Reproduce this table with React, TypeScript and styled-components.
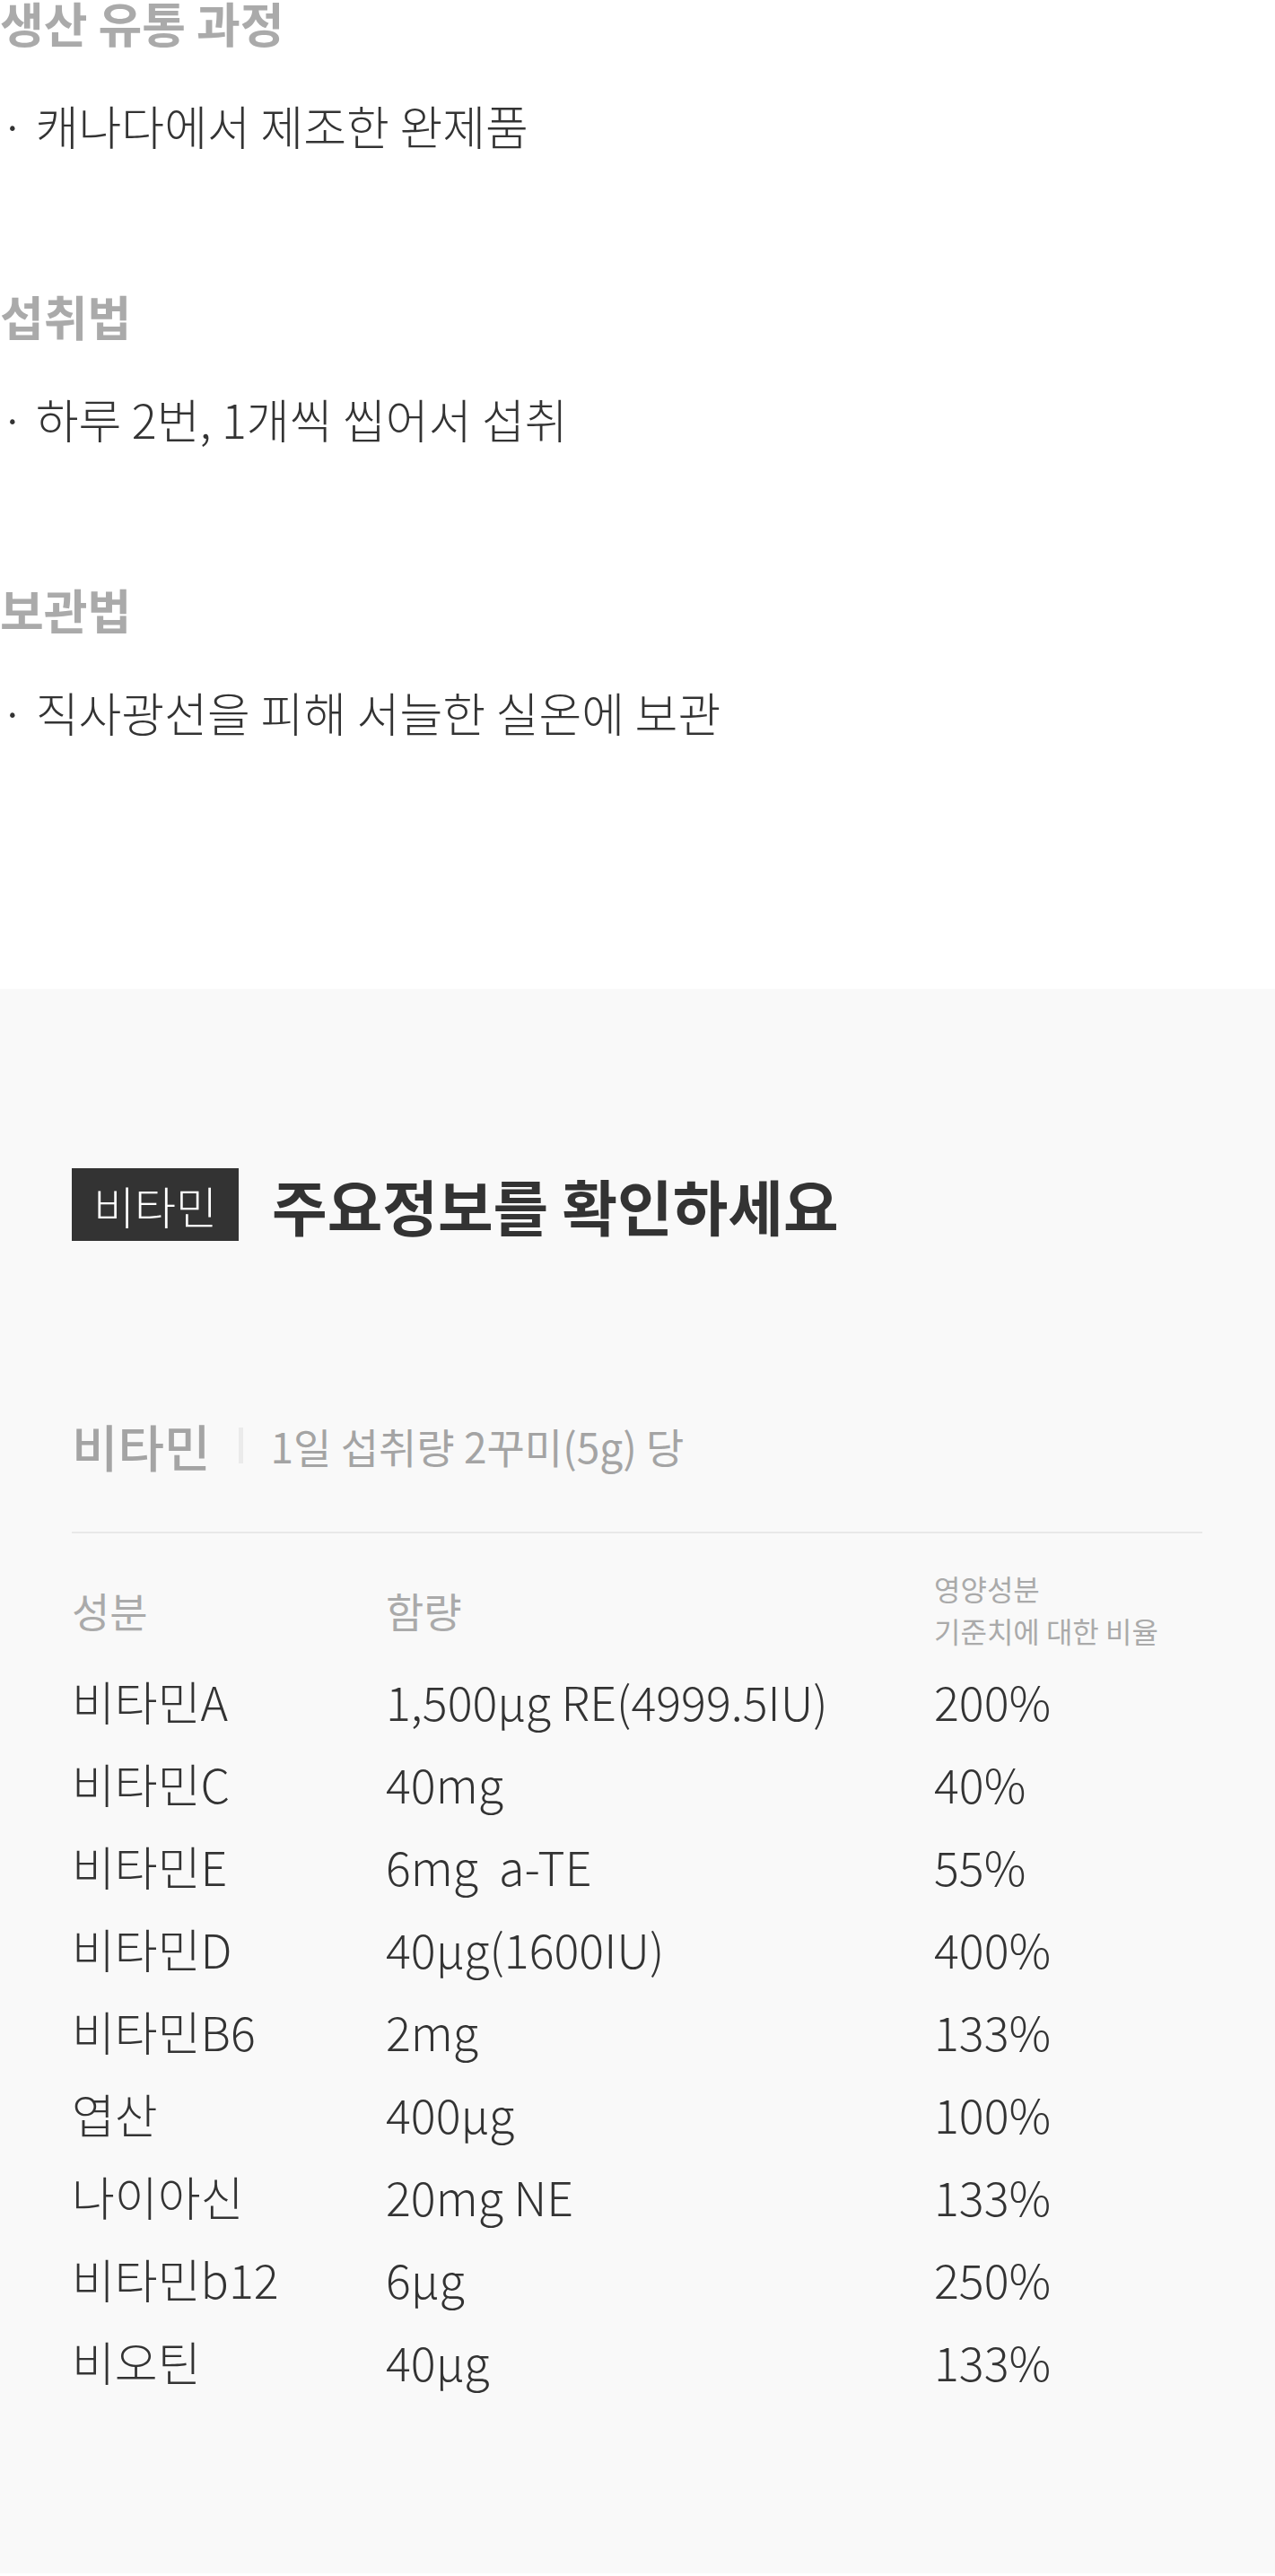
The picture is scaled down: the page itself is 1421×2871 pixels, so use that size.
import styled, { createGlobalStyle } from 'styled-components';

const GlobalStyle = createGlobalStyle`
  body {
    margin: 0;
    background: #fff;
    font-family: "Noto Sans CJK KR", "Noto Sans", sans-serif;
    color: #333;
  }
`;

const Page = styled.div`
  width: 1421px;
`;

const InfoList = styled.div`
  display: flex;
  flex-direction: column;
  gap: 157px;
  padding-bottom: 278px;
`;

const InfoBlock = styled.section`
  display: flex;
  flex-direction: column;
  gap: 60px;
`;

const InfoTitle = styled.h3`
  margin: 0;
  font-size: 53px;
  font-weight: 700;
  line-height: 50px;
  color: #aaa;
`;

const InfoText = styled.p`
  margin: 0;
  font-size: 52px;
  font-weight: 300;
  line-height: 60px;
  color: #333;
`;

const Panel = styled.section`
  background: #f9f9f9;
  padding: 200px 81px 190px 80px;
`;

const PanelHead = styled.div`
  display: flex;
  align-items: center;
  gap: 37px;
`;

const Badge = styled.span`
  display: inline-flex;
  align-items: center;
  justify-content: center;
  height: 81px;
  padding: 0 24px;
  background: #333;
  color: #fff;
  font-size: 50px;
  font-weight: 300;
`;

const PanelTitle = styled.h2`
  margin: 0;
  font-size: 67px;
  font-weight: 700;
  line-height: 81px;
  color: #333;
`;

const SubHead = styled.div`
  display: flex;
  align-items: center;
  gap: 31px;
  margin-top: 187px;
  padding-bottom: 56px;
  border-bottom: 2px solid #e8e8e8;
`;

const SubTitle = styled.span`
  font-size: 56px;
  font-weight: 500;
  color: #a4a4a4;
`;

const Divider = styled.span`
  width: 5px;
  height: 40px;
  background: #ebebeb;
`;

const SubNote = styled.span`
  font-size: 46px;
  font-weight: 400;
  color: #a4a4a4;
`;

const Table = styled.div`
  display: grid;
  grid-template-columns: 350px 611px 1fr;
  margin-top: 28px;
`;

const HeadCell = styled.div<{ $small?: boolean }>`
  display: flex;
  align-items: center;
  height: 113px;
  font-size: ${({ $small }) => ($small ? '32px' : '46px')};
  line-height: ${({ $small }) => ($small ? '47px' : '60px')};
  color: #aaa;
`;

const Cell = styled.div`
  font-size: 52px;
  font-weight: 300;
  line-height: 92px;
  color: #333;
  white-space: pre;
`;

const info = [
  { title: '생산 유통 과정', text: '· 캐나다에서 제조한 완제품' },
  { title: '섭취법', text: '· 하루 2번, 1개씩 씹어서 섭취' },
  { title: '보관법', text: '· 직사광선을 피해 서늘한 실온에 보관' },
];

const rows = [
  ['비타민A', '1,500µg RE(4999.5IU)', '200%'],
  ['비타민C', '40mg', '40%'],
  ['비타민E', '6mg  a-TE', '55%'],
  ['비타민D', '40µg(1600IU)', '400%'],
  ['비타민B6', '2mg', '133%'],
  ['엽산', '400µg', '100%'],
  ['나이아신', '20mg NE', '133%'],
  ['비타민b12', '6µg', '250%'],
  ['비오틴', '40µg', '133%'],
];

export default function App() {
  return (
    <Page>
      <GlobalStyle />
      <InfoList>
        {info.map((item) => (
          <InfoBlock key={item.title}>
            <InfoTitle>{item.title}</InfoTitle>
            <InfoText>{item.text}</InfoText>
          </InfoBlock>
        ))}
      </InfoList>
      <Panel>
        <PanelHead>
          <Badge>비타민</Badge>
          <PanelTitle>주요정보를 확인하세요</PanelTitle>
        </PanelHead>
        <SubHead>
          <SubTitle>비타민</SubTitle>
          <Divider />
          <SubNote>1일 섭취량 2꾸미(5g) 당</SubNote>
        </SubHead>
        <Table>
          <HeadCell>성분</HeadCell>
          <HeadCell>함량</HeadCell>
          <HeadCell $small>
            영양성분
            <br />
            기준치에 대한 비율
          </HeadCell>
          {rows.map((row) =>
            row.map((value, i) => <Cell key={row[0] + i}>{value}</Cell>),
          )}
        </Table>
      </Panel>
    </Page>
  );
}
